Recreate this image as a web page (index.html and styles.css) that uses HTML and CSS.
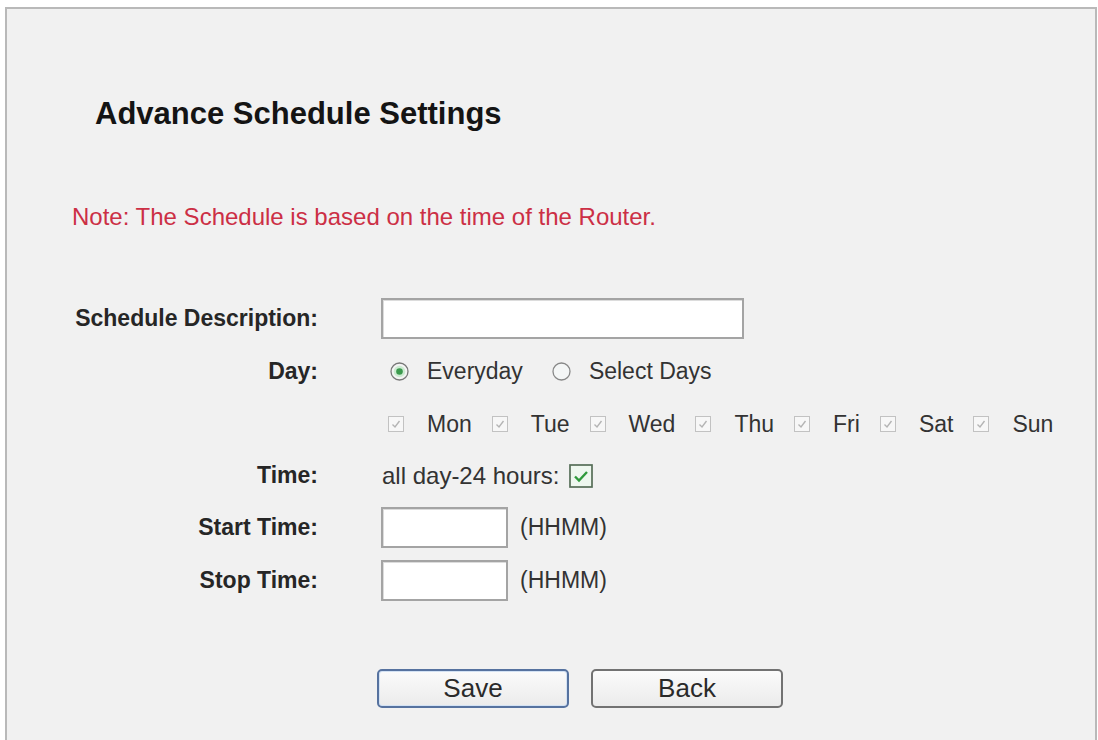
FILE: index.html
```html
<!DOCTYPE html>
<html lang="en">
<head>
  <meta charset="UTF-8" />
  <title>Advance Schedule Settings</title>
  <link rel="stylesheet" href="styles.css">
</head>
<body>

  <div class="panel">
    <h1 class="title">Advance Schedule Settings</h1>
    <p class="note">Note: The Schedule is based on the time of the Router.</p>

    <div class="form">
      <div class="label">Schedule Description:</div>
      <div class="field">
        <input type="text" class="text-input wide" />
      </div>

      <div class="label">Day:</div>
      <div class="field radios">
        <label class="radio-item">
          <svg class="radio" width="19" height="19" viewBox="0 0 19 19">
            <circle cx="9.5" cy="9.5" r="8.5" fill="#f4f4f4" stroke="#787878" stroke-width="1.3" />
            <circle cx="9.5" cy="9.5" r="5.8" fill="#cdebd2" />
            <circle cx="9.5" cy="9.5" r="3.3" fill="#3c9a4e" />
          </svg>
          Everyday
        </label>
        <label class="radio-item">
          <svg class="radio" width="19" height="19" viewBox="0 0 19 19">
            <circle cx="9.5" cy="9.5" r="8.5" fill="#f4f6f6" stroke="#888" stroke-width="1.3" />
          </svg>
          Select Days
        </label>
      </div>

      <div class="label"></div>
      <div class="field days">
        <label class="day"><svg class="box" width="16" height="16" viewBox="0 0 16 16"><rect x="0.5" y="0.5" width="15" height="15" fill="#f7f7f7" stroke="#c2c2c2" /><path d="M4.5 8.5 L7 11 L11.5 5" fill="none" stroke="#b4b4b4" stroke-width="1.4" /></svg>Mon</label>
        <label class="day"><svg class="box" width="16" height="16" viewBox="0 0 16 16"><rect x="0.5" y="0.5" width="15" height="15" fill="#f7f7f7" stroke="#c2c2c2" /><path d="M4.5 8.5 L7 11 L11.5 5" fill="none" stroke="#b4b4b4" stroke-width="1.4" /></svg>Tue</label>
        <label class="day"><svg class="box" width="16" height="16" viewBox="0 0 16 16"><rect x="0.5" y="0.5" width="15" height="15" fill="#f7f7f7" stroke="#c2c2c2" /><path d="M4.5 8.5 L7 11 L11.5 5" fill="none" stroke="#b4b4b4" stroke-width="1.4" /></svg>Wed</label>
        <label class="day"><svg class="box" width="16" height="16" viewBox="0 0 16 16"><rect x="0.5" y="0.5" width="15" height="15" fill="#f7f7f7" stroke="#c2c2c2" /><path d="M4.5 8.5 L7 11 L11.5 5" fill="none" stroke="#b4b4b4" stroke-width="1.4" /></svg>Thu</label>
        <label class="day"><svg class="box" width="16" height="16" viewBox="0 0 16 16"><rect x="0.5" y="0.5" width="15" height="15" fill="#f7f7f7" stroke="#c2c2c2" /><path d="M4.5 8.5 L7 11 L11.5 5" fill="none" stroke="#b4b4b4" stroke-width="1.4" /></svg>Fri</label>
        <label class="day"><svg class="box" width="16" height="16" viewBox="0 0 16 16"><rect x="0.5" y="0.5" width="15" height="15" fill="#f7f7f7" stroke="#c2c2c2" /><path d="M4.5 8.5 L7 11 L11.5 5" fill="none" stroke="#b4b4b4" stroke-width="1.4" /></svg>Sat</label>
        <label class="day"><svg class="box" width="16" height="16" viewBox="0 0 16 16"><rect x="0.5" y="0.5" width="15" height="15" fill="#f7f7f7" stroke="#c2c2c2" /><path d="M4.5 8.5 L7 11 L11.5 5" fill="none" stroke="#b4b4b4" stroke-width="1.4" /></svg>Sun</label>
      </div>

      <div class="label">Time:</div>
      <div class="field allday">
        all day-24 hours:
        <svg class="check" width="24" height="24" viewBox="0 0 24 24">
          <rect x="1" y="1" width="22" height="22" fill="#eef7ef" stroke="#566e58" stroke-width="1.7" />
          <path d="M6 12.5 L10 16.5 L18 8" fill="none" stroke="#2f9a3c" stroke-width="2.4" />
        </svg>
      </div>

      <div class="label">Start Time:</div>
      <div class="field">
        <input type="text" class="text-input short" />
        <span class="hint">(HHMM)</span>
      </div>

      <div class="label">Stop Time:</div>
      <div class="field">
        <input type="text" class="text-input short" />
        <span class="hint">(HHMM)</span>
      </div>
    </div>

    <div class="buttons">
      <button type="button" class="btn btn-save">Save</button>
      <button type="button" class="btn">Back</button>
    </div>
  </div>

</body>
</html>
```

FILE: styles.css
```css
* {
  box-sizing: border-box;
  font-family: 'Liberation Sans', Arial, Helvetica, sans-serif;
}

html,
body {
  height: 100%;
  overflow: hidden;
}

body {
  margin: 0;
  background: #ffffff;
}

.panel {
  margin: 7px 1px 0 5px;
  height: 760px;
  padding-left: 65px;
  background-color: #f1f1f1;
  border: 2px solid #b9b9b9;
  border-bottom: none;
}

.title {
  margin: 87px 0 0 23px;
  font-size: 31px;
  line-height: 36px;
  font-weight: bold;
  color: #141414;
}

.note {
  margin: 71px 0 0 0;
  font-size: 24px;
  line-height: 28px;
  color: #cc2f45;
}

.form {
  display: grid;
  grid-template-columns: 248px auto;
  grid-template-rows: 54px 53px 52px 51px 52px 54px;
  column-gap: 63px;
  align-items: center;
  margin: 60px 0 0 -2px;
}

.label {
  text-align: right;
  font-size: 23px;
  font-weight: bold;
  color: #262626;
}

.field {
  display: flex;
  align-items: center;
  font-size: 23px;
  color: #333;
}

.text-input {
  height: 41px;
  border: 2px solid #a4a4a4;
  background: #fff;
  box-shadow: inset 1px 1px 0 #dcdcdc;
  outline: none;
}

.text-input.wide {
  width: 363px;
}

.text-input.short {
  width: 127px;
}

.hint {
  margin-left: 12px;
}

.radios {
  padding-left: 9px;
  gap: 29px;
}

.radio-item {
  display: flex;
  align-items: center;
  gap: 18px;
}

.days {
  padding-left: 7px;
  gap: 20px;
}

.day {
  display: flex;
  align-items: center;
  gap: 23px;
}

.allday {
  padding-left: 1px;
  font-size: 24px;
}

.check {
  margin-left: 10px;
}

.buttons {
  display: flex;
  gap: 22px;
  margin: 62px 0 0 305px;
}

.btn {
  width: 192px;
  height: 39px;
  padding: 0;
  font-size: 26px;
  color: #2a2a2a;
  background: linear-gradient(#fbfbfb, #ebebeb);
  border: 2px solid #727272;
  border-radius: 5px;
}

.btn-save {
  border-color: #56729f;
  box-shadow: inset 0 0 0 1px #d3e2f4;
}
```
